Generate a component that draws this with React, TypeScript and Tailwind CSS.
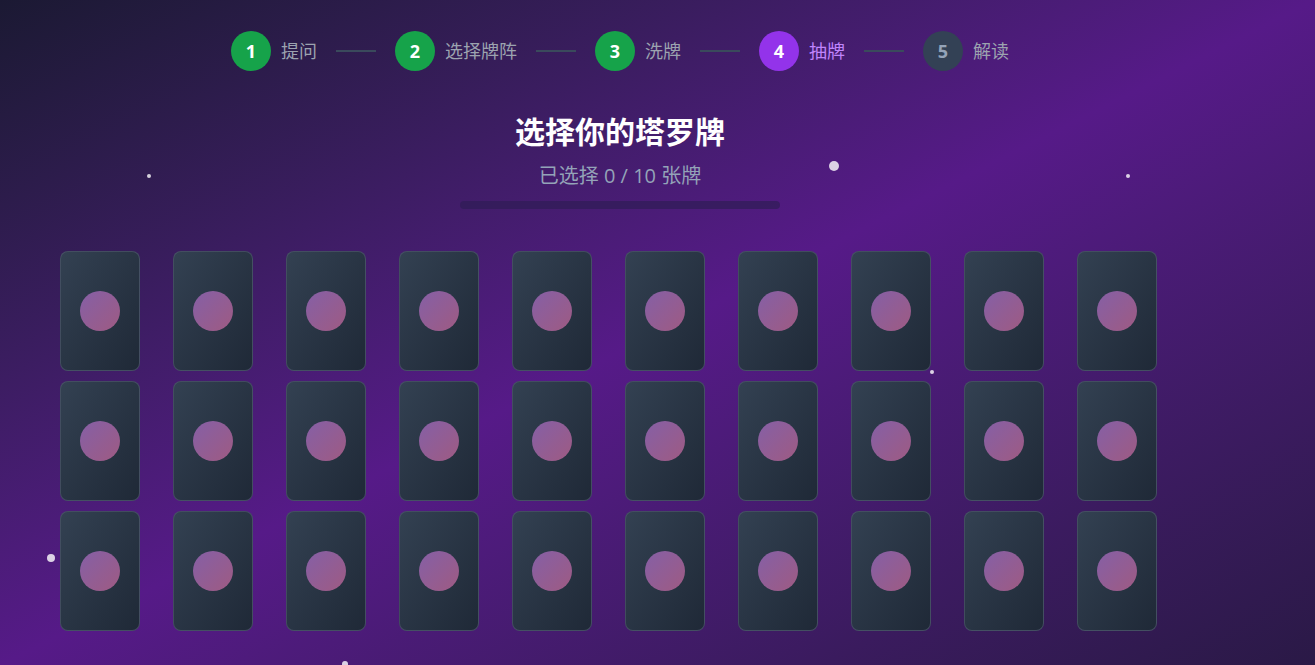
import React from "react";

const steps = [
  { n: 1, label: "提问", state: "done" },
  { n: 2, label: "选择牌阵", state: "done" },
  { n: 3, label: "洗牌", state: "done" },
  { n: 4, label: "抽牌", state: "active" },
  { n: 5, label: "解读", state: "todo" },
];

const stars = [
  { x: 147, y: 174, s: 4 },
  { x: 829, y: 161, s: 10 },
  { x: 1126, y: 174, s: 4 },
  { x: 930, y: 370, s: 4 },
  { x: 47, y: 554, s: 8 },
  { x: 342, y: 661, s: 6 },
];

function Stepper() {
  return (
    <div className="flex items-center justify-center pt-[31px]">
      {steps.map((step, i) => (
        <React.Fragment key={step.n}>
          <div className="flex items-center gap-2.5">
            <div
              className={
                "flex h-10 w-10 items-center justify-center rounded-full text-lg font-bold " +
                (step.state === "done"
                  ? "bg-[#16a34a] text-white"
                  : step.state === "active"
                  ? "bg-[#9333ea] text-white"
                  : "bg-[#334155] text-[#94a3b8]")
              }
            >
              {step.n}
            </div>
            <span
              className={
                "text-lg " +
                (step.state === "active" ? "text-[#c084fc]" : "text-[#9ca3af]")
              }
            >
              {step.label}
            </span>
          </div>
          {i < steps.length - 1 && (
            <div className="mx-[19px] h-0.5 w-10 bg-[#3a4a5c]" />
          )}
        </React.Fragment>
      ))}
    </div>
  );
}

function CardBack() {
  return (
    <div className="flex h-[120px] w-20 items-center justify-center rounded-lg border border-[#4a5568]/80 bg-linear-to-br from-[#334152] to-[#1f2937]">
      <div className="h-10 w-10 rounded-full bg-linear-to-br from-[#855fa6] to-[#9e5a82]" />
    </div>
  );
}

export default function App() {
  return (
    <div
      className="relative min-h-screen overflow-hidden bg-linear-to-br from-[#1b1933] via-[#561a88] to-[#2a1946]"
      style={{ fontFamily: "'Open Sans', 'Noto Sans CJK SC', sans-serif" }}
    >
      {stars.map((st, i) => (
        <div
          key={i}
          className="absolute rounded-full bg-white/80"
          style={{ left: st.x, top: st.y, width: st.s, height: st.s }}
        />
      ))}

      <div className="relative w-[1240px]">
        <Stepper />

        <div className="mt-[43px] flex flex-col items-center">
          <h1 className="text-3xl font-bold text-white">选择你的塔罗牌</h1>
          <p className="mt-3 text-xl text-[#94a3b8]">已选择 0 / 10 张牌</p>
          <div className="mt-[11px] h-2 w-80 rounded-full bg-[#2f1c55]/70" />
        </div>

        <div className="mt-[42px] grid grid-cols-[repeat(10,80px)] gap-x-[33px] gap-y-[10px] pl-[60px]">
          {Array.from({ length: 30 }).map((_, i) => (
            <CardBack key={i} />
          ))}
        </div>
      </div>
    </div>
  );
}
